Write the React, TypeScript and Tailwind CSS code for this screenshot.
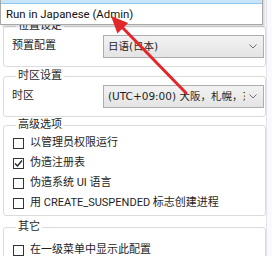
import React from 'react';

const font = "font-['Roboto','Noto_Sans_CJK_SC',sans-serif]";

function Select({ text }: { text: string }) {
  return (
    <div className="flex-1 min-w-0 h-[23px] flex items-center border border-[#adadad] bg-gradient-to-b from-[#f2f2f2] to-[#e4e4e4] pl-[4px] pr-[6px] overflow-hidden">
      <span className="flex-1 min-w-0 whitespace-nowrap overflow-hidden font-['DejaVu_Sans','Noto_Sans_CJK_SC',sans-serif] text-[10.5px]">{text}</span>
      <svg width="8" height="5" viewBox="0 0 8 5" className="ml-[4px] shrink-0">
        <path d="M0.5 0.5 L4 4 L7.5 0.5" fill="none" stroke="#707070" strokeWidth="1" />
      </svg>
    </div>
  );
}

function Check({ label, checked = false }: { label: string; checked?: boolean }) {
  return (
    <div className="h-[20px] flex items-center gap-[6px]">
      <div className="ml-[1px] w-[11px] h-[11px] border border-[#333333] bg-white flex items-center justify-center">
        {checked && (
          <svg width="9" height="9" viewBox="0 0 9 9">
            <path d="M1 4.5 L3.5 7 L8 1.5" fill="none" stroke="#222" strokeWidth="1.4" />
          </svg>
        )}
      </div>
      <span>{label}</span>
    </div>
  );
}

function Group({ title, className, children }: { title: string; className: string; children: React.ReactNode }) {
  return (
    <fieldset className={`min-w-0 border border-[#dcdcdc] rounded-[3px] ${className}`}>
      <legend className="ml-[4px] px-[2px] leading-[12px]">{title}</legend>
      {children}
    </fieldset>
  );
}

export default function App() {
  return (
    <div className={`relative w-[272px] h-[256px] overflow-hidden bg-white text-[11px] text-[#1e1e1e] ${font} flex`}>
      <div className="w-[266px] shrink-0 pl-[3px] flex flex-col">
        <Group title="位置设定" className="mt-[20px] pl-[8px] pr-[1px] pt-[3px] pb-[8px]">
          <div className="flex items-center">
            <span className="w-[91px] shrink-0">预置配置</span>
            <Select text="日语(日本)" />
          </div>
        </Group>
        <Group title="时区设置" className="mt-[3px] pl-[8px] pr-[1px] pt-[3px] pb-[8px]">
          <div className="flex items-center">
            <span className="w-[91px] shrink-0">时区</span>
            <Select text="(UTC+09:00) 大阪，札幌，东京" />
          </div>
        </Group>
        <Group title="高级选项" className="mt-[2px] pl-[8px] pt-[2px] pb-[2px]">
          <Check label="以管理员权限运行" />
          <Check label="伪造注册表" checked />
          <Check label="伪造系统 UI 语言" />
          <Check label="用 CREATE_SUSPENDED 标志创建进程" />
        </Group>
        <Group title="其它" className="mt-[5px] pl-[8px] pt-[7px] pb-[8px]">
          <Check label="在一级菜单中显示此配置" />
        </Group>
      </div>
      <div className="flex-1 border-l border-[#e4e4f0] bg-[#fafafb]" />

      {/* context menu */}
      <div className="absolute left-0 top-[-17px] w-[263px] bg-white border border-[#a8a8a8] shadow-[2px_2px_2px_rgba(0,0,0,0.15)] text-[11.4px] text-[#111]">
        <div className="h-[20px] flex items-center pl-[5px] bg-[#c7e4f8] border-b border-[#8ec6ef]">Run in Japanese</div>
        <div className="h-[20px] flex items-center pl-[5px] pt-[2px]">Run in Japanese (Admin)</div>
      </div>

      {/* red arrow */}
      <svg className="absolute left-0 top-0" width="272" height="256" viewBox="0 0 272 256">
        <line x1="186" y1="93" x2="121" y2="26" stroke="#e3262a" strokeWidth="3" strokeLinecap="round" />
        <polygon points="111,16 128.2,23.1 117.4,33.5" fill="#e3262a" />
      </svg>
    </div>
  );
}
